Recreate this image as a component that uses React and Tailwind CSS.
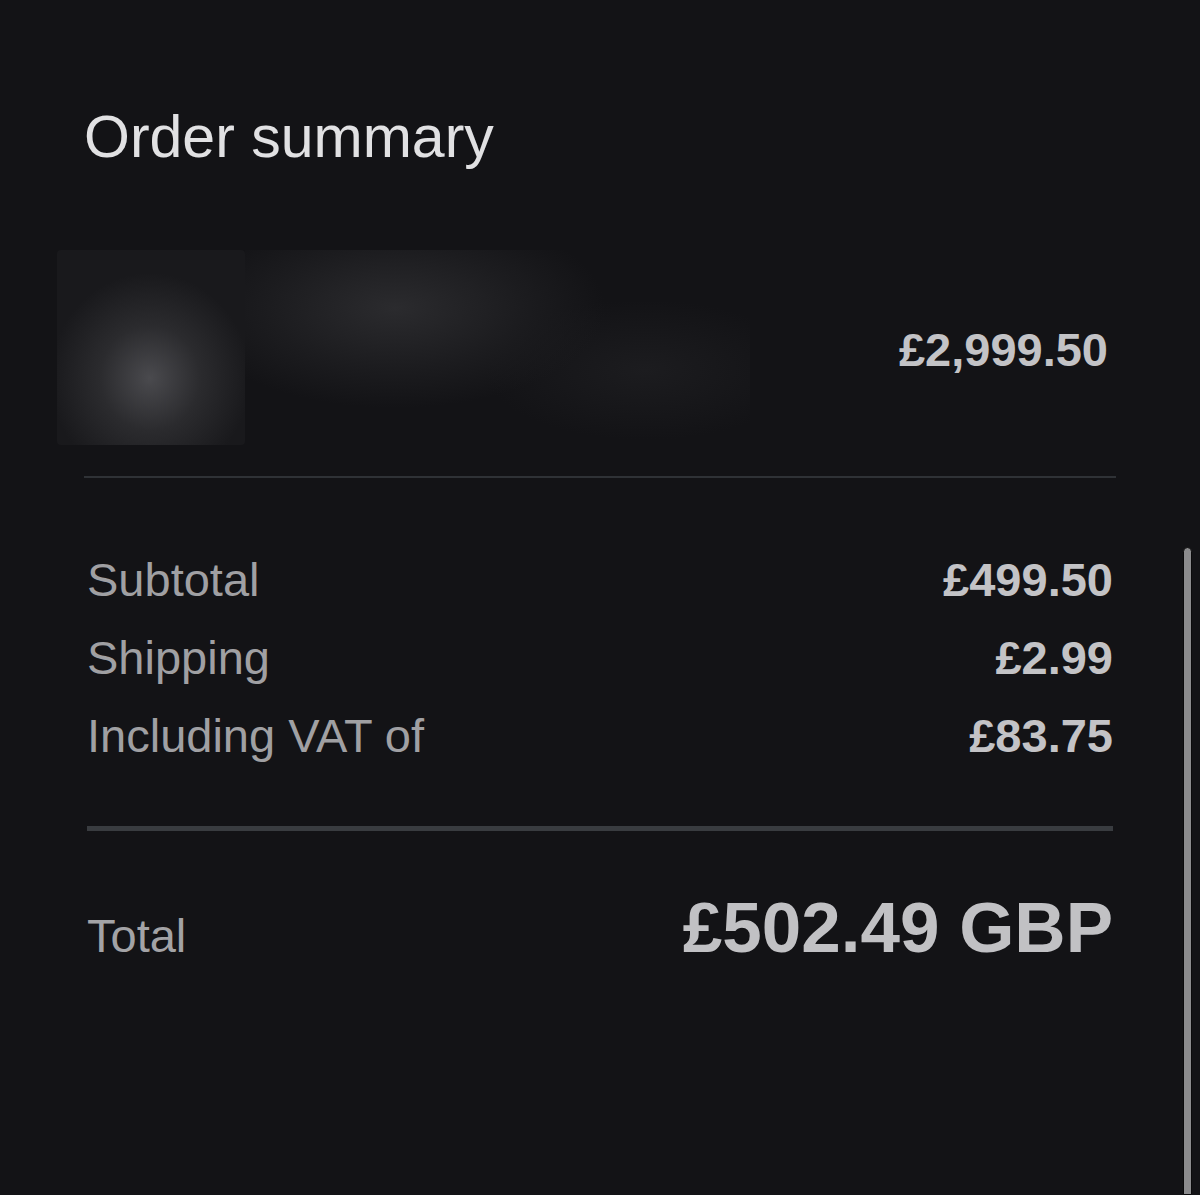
import React from 'react';

const rows = [
    { label: 'Subtotal', value: '£499.50' },
    { label: 'Shipping', value: '£2.99' },
    { label: 'Including VAT of', value: '£83.75' },
];

// blurred product thumbnail + title, as in the screenshot
const BlurredItem = () => (
    <div className="flex h-[195px] -ml-[27px]">
        <div className="w-[188px] h-full rounded-[4px] bg-[#19191c] bg-[radial-gradient(ellipse_100px_105px_at_93px_128px,#4a4a4e,#2b2b2e_50%,#19191c_100%)]" />
        <div className="w-[505px] h-full bg-[radial-gradient(ellipse_210px_100px_at_150px_58px,#2b2b2e,#1c1c1f_60%,transparent_100%),radial-gradient(ellipse_160px_70px_at_400px_120px,#1c1c1f,transparent_100%)]" />
    </div>
);

export default function App() {
    return (
        <div className="relative w-[1200px] min-h-[1195px] bg-[#131316] font-['Liberation_Sans',Arial,sans-serif] overflow-hidden">
            <div className="pl-[84px] w-[1116px]">
                {/* Header */}
                <h1 className="pt-[108px] text-[59px] leading-none text-[#e1e1e3]">Order summary</h1>

                {/* Item */}
                <div className="mt-[83px] flex items-center justify-between pr-[8px]">
                    <BlurredItem />
                    <span className="pt-[4px] text-[47px] leading-none font-bold text-[#c3c3c6]">£2,999.50</span>
                </div>

                <div className="mt-[31px] h-[2px] bg-[#2f3236]" />

                {/* Totals */}
                <div className="px-[3px]">
                    <div className="mt-[63px]">
                        {rows.map((r) => (
                            <div key={r.label} className="flex items-baseline justify-between leading-[78px]">
                                <span className="text-[47px] text-[#a0a0a3]">{r.label}</span>
                                <span className="text-[47px] font-bold text-[#c3c3c6]">{r.value}</span>
                            </div>
                        ))}
                    </div>

                    <div className="mt-[51px] h-[5px] bg-[#393c40]" />

                    <div className="mt-[61px] flex items-baseline justify-between leading-none">
                        <span className="text-[47px] text-[#a3a3a6]">Total</span>
                        <span className="text-[71px] font-bold text-[#c1c1c4]">£502.49 GBP</span>
                    </div>
                </div>
            </div>

            {/* scrollbar thumb */}
            <div className="absolute left-[1183px] top-[547px] bottom-0 w-[9px] rounded-t-full bg-[#8b8b8d] border border-[#0a0a0b]" />
        </div>
    );
}
